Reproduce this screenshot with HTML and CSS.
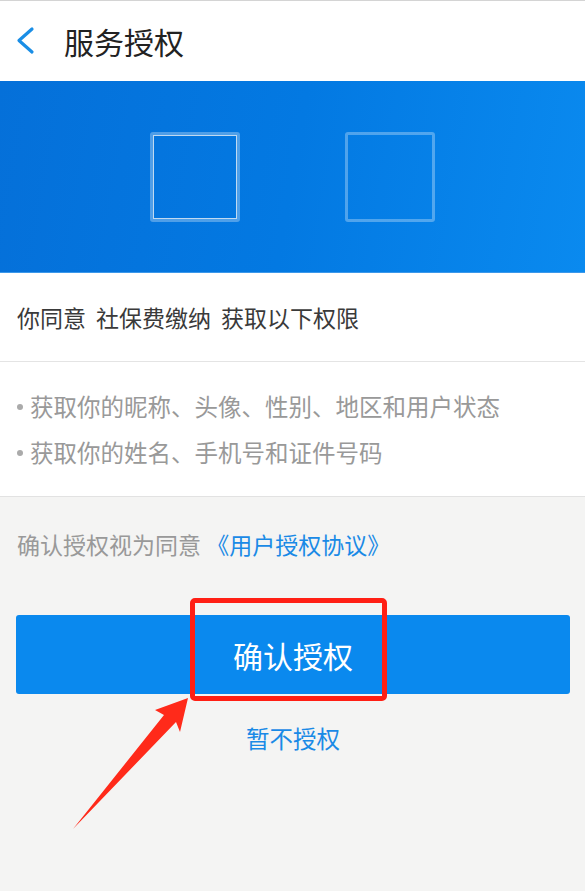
FILE: index.html
```html
<!DOCTYPE html>
<html lang="zh-CN">
<head>
    <meta charset="UTF-8">
    <meta name="viewport" content="width=device-width, initial-scale=1.0">
    <title>服务授权</title>
    <link rel="stylesheet" href="styles.css">
</head>
<body>
    <header class="topbar">
        <svg class="back" width="20" height="30" viewBox="0 0 20 30">
            <polyline points="16,3 3,14.5 16,26" fill="none" stroke="#1a8ee6" stroke-width="3.2" stroke-linecap="round" stroke-linejoin="round"/>
        </svg>
        <h1 class="title">服务授权</h1>
    </header>

    <div class="banner">
        <div class="slot slot-app"></div>
        <div class="slot"></div>
    </div>

    <div class="intro">你同意<span class="gap"></span>社保费缴纳<span class="gap"></span>获取以下权限</div>

    <ul class="perms">
        <li>获取你的昵称、头像、性别、地区和用户状态</li>
        <li>获取你的姓名、手机号和证件号码</li>
    </ul>

    <p class="note">确认授权视为同意 <a href="#" class="agreement">《用户授权协议》</a></p>

    <div class="actions">
        <button class="confirm">确认授权</button>
        <a href="#" class="decline">暂不授权</a>

        <!-- annotation drawn over the screenshot -->
        <div class="mark"></div>
        <svg class="arrow" width="140" height="150" viewBox="0 0 140 150">
            <polygon points="13,140 104,26 95,21 128,9 120,43 116,33" fill="#ff2a1a"/>
        </svg>
    </div>
</body>
</html>
```

FILE: styles.css
```css
body {
    margin: 0;
    min-height: 891px;
    background-color: #f4f4f3;
    font-family: "Noto Sans CJK SC", "Noto Sans", sans-serif;
    color: #333;
}
.topbar {
    display: flex;
    align-items: center;
    height: 80px;
    background-color: #fff;
    border-top: 1px solid #d4d4d4;
}
.back {
    margin-left: 16px;
}
.title {
    margin: 0 0 0 28px;
    font-size: 30px;
    font-weight: normal;
    color: #222;
}
.banner {
    display: flex;
    justify-content: center;
    align-items: center;
    gap: 105px;
    height: 191px;
    background: linear-gradient(100deg, #0570d9 0%, #0379e2 50%, #0a8aef 100%);
    border-bottom: 1px solid #3c98ea;
}
.slot {
    width: 84px;
    height: 84px;
    border: 3px solid rgba(255, 255, 255, 0.3);
    border-radius: 3px;
}
.slot-app {
    box-shadow: inset 0 0 0 1px rgba(225, 235, 245, 0.85);
}
.intro {
    height: 88px;
    line-height: 88px;
    padding-left: 17px;
    font-size: 23px;
    color: #3a3a3a;
    background-color: #fff;
    border-bottom: 1px solid #e4e4e4;
}
.gap {
    display: inline-block;
    width: 10px;
}
.perms {
    list-style: none;
    margin: 0;
    padding: 21px 0 21px 17px;
    background-color: #fff;
    border-bottom: 1px solid #e2e2e2;
}
.perms li {
    display: flex;
    align-items: center;
    height: 46px;
    font-size: 23.5px;
    color: #999;
}
.perms li::before {
    content: "";
    width: 6px;
    height: 6px;
    margin: 2px 7px 0 0;
    border-radius: 50%;
    background-color: #aaa;
}
.note {
    margin: 24px 0 0;
    padding-left: 17px;
    line-height: 46px;
    font-size: 23px;
    color: #999;
}
.agreement {
    color: #1a8ae6;
    text-decoration: none;
}
.actions {
    position: relative;
    display: flex;
    flex-direction: column;
    align-items: center;
    margin-top: 48px;
    padding: 0 15px 0 16px;
}
.confirm {
    width: 100%;
    height: 79px;
    border: none;
    border-radius: 3px;
    background-color: #0a89ee;
    color: #fff;
    font-family: inherit;
    font-size: 30px;
}
.decline {
    margin-top: 21px;
    line-height: 46px;
    font-size: 23.5px;
    color: #1a8ae6;
    text-decoration: none;
}
.mark {
    position: absolute;
    left: 190px;
    top: -17px;
    width: 187px;
    height: 93px;
    border: 5px solid #ff1f14;
    border-radius: 5px;
}
.arrow {
    position: absolute;
    left: 60px;
    top: 74px;
}
```
